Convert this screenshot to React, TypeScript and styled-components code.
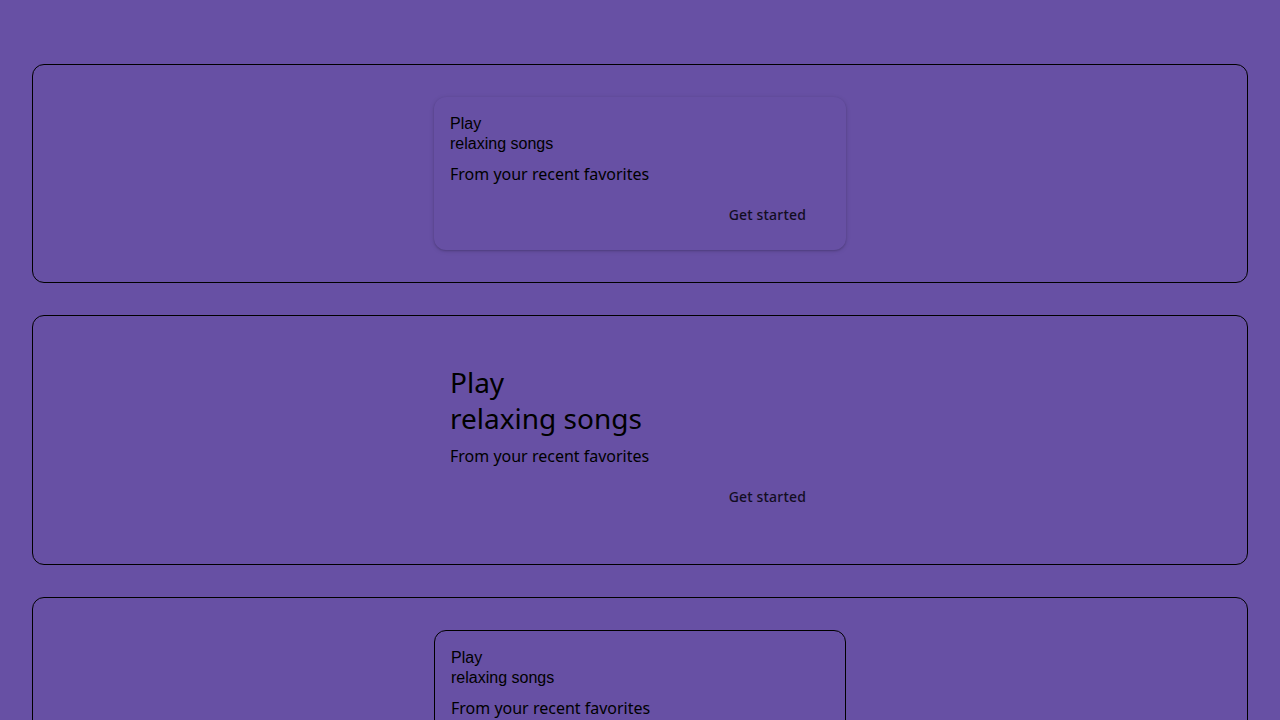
import React from "react";
import styled, { createGlobalStyle, css } from "styled-components";

const Global = createGlobalStyle`
  html, body {
    margin: 0;
    padding: 0;
    background: #6750a4;
    color: #000;
    font-family: "Noto Sans", sans-serif;
  }
`;

const Page = styled.div`
  display: flex;
  flex-direction: column;
  gap: 32px;
  padding: 64px 32px;
`;

const Frame = styled.section`
  border: 1px solid #000;
  border-radius: 12px;
  padding: 32px;
  display: flex;
  justify-content: center;
`;

type Variant = "elevated" | "filled" | "outlined";

const Card = styled.div<{ $variant: Variant }>`
  box-sizing: border-box;
  width: 412px;
  padding: 16px;
  border-radius: 12px;
  display: flex;
  flex-direction: column;
  ${(p) =>
    p.$variant === "elevated" &&
    css`
      background: #6750a4;
      box-shadow: 0 1px 2px rgba(0, 0, 0, 0.18), 0 1px 4px 1px rgba(0, 0, 0, 0.08);
    `}
  ${(p) =>
    p.$variant === "outlined" &&
    css`
      border: 1px solid #000;
    `}
`;

const Title = styled.h2<{ $large?: boolean }>`
  margin: 0;
  font-weight: 400;
  color: #000;
  ${(p) =>
    p.$large
      ? css`
          font-family: "Noto Sans", sans-serif;
          font-size: 28px;
          line-height: 36px;
        `
      : css`
          padding-top: 1px;
          font-family: "Liberation Sans", Arial, sans-serif;
          font-size: 16px;
          line-height: 20px;
        `}
`;

const Subtitle = styled.p`
  margin: 8px 0 0;
  font-family: "Noto Sans", sans-serif;
  font-size: 16px;
  line-height: 24px;
  color: #000;
`;

const Actions = styled.div`
  display: flex;
  justify-content: flex-end;
  margin-top: 8px;
`;

const TextButton = styled.button`
  height: 40px;
  padding: 0 24px;
  border: none;
  background: transparent;
  border-radius: 20px;
  font-family: "Noto Sans", sans-serif;
  font-size: 14px;
  font-weight: 500;
  letter-spacing: 0.18px;
  color: #120d22;
  cursor: pointer;
`;

function PlayCard({ variant, large }: { variant: Variant; large?: boolean }) {
  return (
    <Card $variant={variant}>
      <Title $large={large}>
        Play
        <br />
        relaxing songs
      </Title>
      <Subtitle>From your recent favorites</Subtitle>
      <Actions>
        <TextButton>Get started</TextButton>
      </Actions>
    </Card>
  );
}

export default function App() {
  return (
    <>
      <Global />
      <Page>
        <Frame>
          <PlayCard variant="elevated" />
        </Frame>
        <Frame>
          <PlayCard variant="filled" large />
        </Frame>
        <Frame>
          <PlayCard variant="outlined" />
        </Frame>
      </Page>
    </>
  );
}
